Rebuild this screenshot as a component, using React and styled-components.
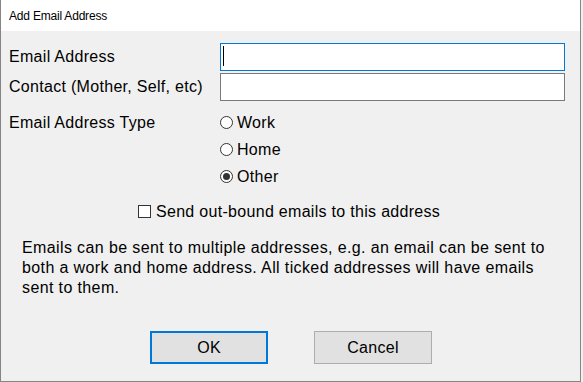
import React, { useState } from 'react';
import styled, { createGlobalStyle } from 'styled-components';

const GlobalStyle = createGlobalStyle`
  html, body {
    margin: 0;
    padding: 0;
    background: #f0f0f0;
  }
`;

const Window = styled.div`
  display: flex;
  flex-direction: column;
  box-sizing: border-box;
  width: 581px;
  height: 382px;
  border-left: 1px solid #858585;
  border-right: 1px solid #858585;
  border-bottom: 1px solid #858585;
  background: #f0f0f0;
  font-family: "Liberation Sans", Arial, sans-serif;
  color: #000;
  overflow: hidden;
`;

const TitleBar = styled.div`
  display: flex;
  align-items: center;
  height: 31px;
  flex-shrink: 0;
  padding-left: 8px;
  background: #fff;
  font-size: 12px;
  letter-spacing: -0.2px;
`;

const Body = styled.div`
  display: flex;
  flex-direction: column;
  flex: 1;
  padding: 12px 0 17px 8px;
  font-size: 16px;
  letter-spacing: 0.3px;
`;

const FieldGrid = styled.div`
  display: grid;
  grid-template-columns: 211px 345px;
  row-gap: 2px;
  align-items: center;
`;

const Label = styled.label`
  display: flex;
  align-items: center;
  height: ${(p) => p.$height || 28}px;
  align-self: start;
`;

const InputWrap = styled.div`
  position: relative;
  display: flex;
`;

const TextBox = styled.input`
  box-sizing: border-box;
  width: 345px;
  height: 28px;
  margin: 0;
  padding: 0 0 0 2px;
  border: 1px solid ${(p) => (p.$focused ? '#0078d7' : '#7a7a7a')};
  background: #fff;
  outline: none;
  font-family: "Liberation Sans", Arial, sans-serif;
  font-size: 16px;
  caret-color: transparent;
`;

// drawn caret, since the headless page may not show a blinking one
const Caret = styled.span`
  position: absolute;
  top: 3px;
  left: 3px;
  width: 1px;
  height: 20px;
  background: #000;
  pointer-events: none;
`;

const TypeSection = styled(FieldGrid)`
  margin-top: 8px;
  align-items: start;
`;

const RadioGroup = styled.div`
  display: flex;
  flex-direction: column;
`;

const OptionRow = styled.label`
  display: flex;
  align-items: center;
  gap: 4px;
  height: 27px;
  cursor: default;
`;

const RadioCircle = styled.span`
  position: relative;
  box-sizing: border-box;
  width: 13px;
  height: 13px;
  border: 1px solid #333;
  border-radius: 50%;
  background: #fff;
  flex-shrink: 0;

  &::after {
    content: '';
    display: ${(p) => (p.$checked ? 'block' : 'none')};
    position: absolute;
    top: 2px;
    left: 2px;
    width: 7px;
    height: 7px;
    border-radius: 50%;
    background: #333;
  }
`;

const CheckRow = styled(OptionRow)`
  margin: 8px 0 0 129px;
  gap: 5px;
`;

const CheckBox = styled.span`
  box-sizing: border-box;
  width: 13px;
  height: 13px;
  border: 1px solid #333;
  background: #fff;
  flex-shrink: 0;
`;

const Note = styled.p`
  margin: 13px 0 0 13px;
  width: 540px;
  line-height: 20px;
  letter-spacing: 0.38px;
`;

const ButtonRow = styled.div`
  display: flex;
  gap: 46px;
  margin: auto 0 0 141px;
`;

const Button = styled.button`
  box-sizing: border-box;
  width: 118px;
  height: 33px;
  margin: 0;
  padding: 0;
  border: ${(p) => (p.$default ? '2px solid #0078d7' : '1px solid #adadad')};
  background: #e1e1e1;
  font-family: "Liberation Sans", Arial, sans-serif;
  font-size: 16px;
  letter-spacing: 0.3px;
  color: #000;
`;

const types = ['Work', 'Home', 'Other'];

export default function App() {
  const [type, setType] = useState('Other');
  const [outbound, setOutbound] = useState(false);

  return (
    <>
      <GlobalStyle />
      <Window>
        <TitleBar>Add Email Address</TitleBar>
        <Body>
          <FieldGrid>
            <Label>Email Address</Label>
            <InputWrap>
              <TextBox $focused />
              <Caret />
            </InputWrap>
            <Label>Contact (Mother, Self, etc)</Label>
            <InputWrap>
              <TextBox />
            </InputWrap>
          </FieldGrid>
          <TypeSection>
            <Label $height={27}>Email Address Type</Label>
            <RadioGroup>
              {types.map((t) => (
                <OptionRow key={t} onClick={() => setType(t)}>
                  <RadioCircle $checked={type === t} />
                  {t}
                </OptionRow>
              ))}
            </RadioGroup>
          </TypeSection>
          <CheckRow onClick={() => setOutbound(!outbound)}>
            <CheckBox />
            Send out-bound emails to this address
          </CheckRow>
          <Note>
            Emails can be sent to multiple addresses, e.g. an email can be sent to
            both a work and home address. All ticked addresses will have emails
            sent to them.
          </Note>
          <ButtonRow>
            <Button $default>OK</Button>
            <Button>Cancel</Button>
          </ButtonRow>
        </Body>
      </Window>
    </>
  );
}
